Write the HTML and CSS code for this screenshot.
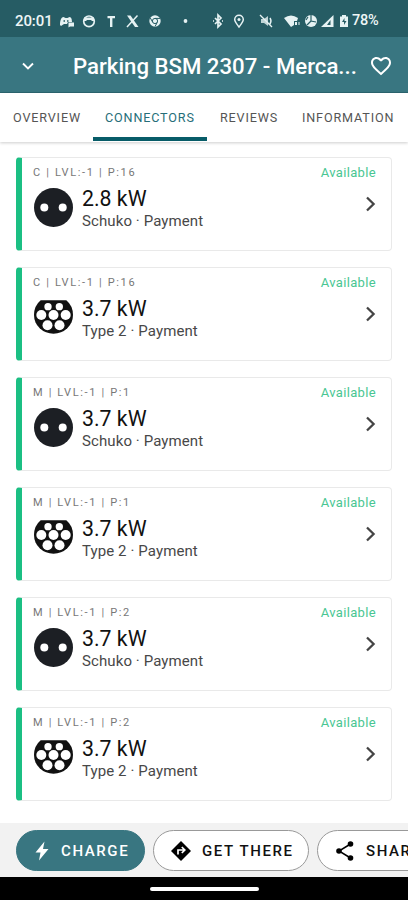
FILE: index.html
```html
<!DOCTYPE html>
<html lang="en">
<head>
<meta charset="utf-8">
<title>Parking BSM 2307</title>
<link rel="stylesheet" href="styles.css">
</head>
<body>
<svg class="defs" width="0" height="0">
  <symbol id="schuko" viewBox="0 0 39 39"><circle cx="19.5" cy="19.5" r="19.5" fill="#1c1f24"/><circle cx="10.3" cy="19.5" r="4" fill="#fff"/><circle cx="28.7" cy="19.5" r="4" fill="#fff"/></symbol>
  <symbol id="type2" viewBox="0 0 117 117"><path d="M20 7H97Q117 24 117 51A58.5 56 0 0 1 0 51Q0 24 20 7Z" fill="#111"/><g fill="#fff"><circle cx="42" cy="26" r="11"/><circle cx="76" cy="26" r="11"/><circle cx="22" cy="51" r="15"/><circle cx="58.5" cy="51" r="15"/><circle cx="95" cy="51" r="15"/><circle cx="40.500" cy="82" r="15"/><circle cx="76.500" cy="82" r="15"/></g></symbol>
  <symbol id="chev" viewBox="0 0 12 18"><path d="M2 2.500L8.600 9L2 15.500" fill="none" stroke="#444" stroke-width="2.300"/></symbol>
</svg>
<header class="status">
  <span class="clock">20:01</span>
  <svg class="status-icons" viewBox="0 0 290 24" width="290" height="24" fill="#e6f2f3" stroke="none">
    <path d="M2 16c0-4 1-8 3.500-8l2 1h2l2-1c2 0 2.500 3 2.500 5h-4l-1 2H6L3 17ZM10.500 13.500h5.500v4h-4l-1.500 1Z"/>
    <path d="M5.500 12h1.500M9 12h1.500" stroke="#265c64" stroke-width="1.400"/>
    <circle cx="31" cy="12.300" r="5.300" fill="none" stroke="#e6f2f3" stroke-width="1.700"/><path d="M26 8.500h10v3.500h-2l-1-1h-4l-1 1h-2Z"/>
    <path d="M49.500 7h7.500v2.300h-2.600V18h-2.400V9.300h-2.500Z"/>
    <path d="M79.500 6.500L69 18" fill="none" stroke="#e6f2f3" stroke-width="1.500"/><path d="M69 6.500h3.500l8 11.500H77Z"/>
    <circle cx="97" cy="12" r="5.700"/><circle cx="97" cy="12" r="2.600" fill="none" stroke="#265c64"/><path d="M97 9.400h5M94.700 13.200L92.300 9M99.200 13.500L97 17.500" stroke="#265c64"/>
    <circle cx="127.500" cy="12" r="1.900"/>
    <path d="M157 9l6 6-3 3V6l3 3-6 6M155 12h1M164 12h1" fill="none" stroke="#e6f2f3" stroke-width="1.700"/>
    <path d="M181 18c-3-4-4.300-5.500-4.300-7.500a4.300 4.300 0 0 1 8.600 0c0 2-1.300 3.500-4.300 7.500Z" fill="none" stroke="#e6f2f3" stroke-width="1.500"/><circle cx="181" cy="10.500" r="1.500"/>
    <path d="M203 10h3l4-3v10l-4-3h-3Z" opacity=".8"/><path d="M202 6l12 12M212 9q2 3 0 6" fill="none" stroke="#e6f2f3" stroke-width="1.400"/>
    <path d="M226 9q7-5 14 0l-1 3h-3v4l-3 2Z"/><path d="M237 13h2v3h-2ZM240.500 13h1v3h-1Z"/>
    <circle cx="253" cy="12" r="6"/><path d="M253 6v6l5 1M253 12l-4 4M250 8l-2 3" fill="none" stroke="#265c64" stroke-width="1.200"/>
    <path d="M275.500 6v12h-12.500Z"/><path d="M272.500 11v5h-3.500Z" fill="#265c64"/>
    <path d="M282 7.500h2V6h4v1.500h2V18h-8Z"/><path d="M286.500 9l-2.500 4h2v3l2.500-4h-2Z" fill="#265c64"/>
  </svg>
  <span class="battery">78%</span>
</header>
<div class="appbar">
  <svg class="down" width="14" height="10" viewBox="0 0 14 10"><path d="M2 2.500l5 5 5-5" fill="none" stroke="#fff" stroke-width="1.900"/></svg>
  <h1>Parking BSM 2307 - Merca...</h1>
  <svg class="heart" width="24" height="24" viewBox="0 0 24 24" fill="#fff"><path d="M16.500 3c-1.740 0-3.410.81-4.500 2.090C10.910 3.810 9.240 3 7.500 3 4.420 3 2 5.420 2 8.500c0 3.780 3.400 6.860 8.550 11.540L12 21.350l1.450-1.320C18.600 15.360 22 12.280 22 8.500 22 5.420 19.580 3 16.500 3zm-4.400 15.550l-.1.100-.1-.1C7.140 14.240 4 11.390 4 8.500 4 6.500 5.500 5 7.500 5c1.540 0 3.040.99 3.570 2.360h1.870C13.460 5.990 14.960 5 16.500 5c2 0 3.500 1.500 3.500 3.500 0 2.890-3.140 5.740-7.900 10.050z"/></svg>
</div>
<nav class="tabs">
  <a class="t1">OVERVIEW</a><a class="t2 active">CONNECTORS</a><a class="t3">REVIEWS</a><a class="t4">INFORMATION</a>
</nav>
<main class="list">
  <article class="card"><svg class="plug"><use href="#schuko"/></svg><div class="info"><p class="place">C | LVL:-1 | P:16</p><p class="power">2.8 kW</p><p class="kind">Schuko · Payment</p></div><div class="side"><span class="avail">Available</span><svg class="chev"><use href="#chev"/></svg></div></article>
  <article class="card"><svg class="plug"><use href="#type2"/></svg><div class="info"><p class="place">C | LVL:-1 | P:16</p><p class="power">3.7 kW</p><p class="kind">Type 2 · Payment</p></div><div class="side"><span class="avail">Available</span><svg class="chev"><use href="#chev"/></svg></div></article>
  <article class="card"><svg class="plug"><use href="#schuko"/></svg><div class="info"><p class="place">M | LVL:-1 | P:1</p><p class="power">3.7 kW</p><p class="kind">Schuko · Payment</p></div><div class="side"><span class="avail">Available</span><svg class="chev"><use href="#chev"/></svg></div></article>
  <article class="card"><svg class="plug"><use href="#type2"/></svg><div class="info"><p class="place">M | LVL:-1 | P:1</p><p class="power">3.7 kW</p><p class="kind">Type 2 · Payment</p></div><div class="side"><span class="avail">Available</span><svg class="chev"><use href="#chev"/></svg></div></article>
  <article class="card"><svg class="plug"><use href="#schuko"/></svg><div class="info"><p class="place">M | LVL:-1 | P:2</p><p class="power">3.7 kW</p><p class="kind">Schuko · Payment</p></div><div class="side"><span class="avail">Available</span><svg class="chev"><use href="#chev"/></svg></div></article>
  <article class="card"><svg class="plug"><use href="#type2"/></svg><div class="info"><p class="place">M | LVL:-1 | P:2</p><p class="power">3.7 kW</p><p class="kind">Type 2 · Payment</p></div><div class="side"><span class="avail">Available</span><svg class="chev"><use href="#chev"/></svg></div></article>
</main>
<footer class="actions">
  <button class="pill charge"><svg width="22" height="22" viewBox="0 0 22 22"><path d="M13.500 1.500L4.500 12.500h5L8 20.500l9.500-11.500h-5.500Z" fill="#fff"/></svg>CHARGE</button>
  <button class="pill there"><svg width="22" height="22" viewBox="0 0 22 22"><path d="M11 1L21 11 11 21 1 11Z" fill="#000"/><path d="M8 14.500V10h6M11.800 7l3 3-3 3" fill="none" stroke="#fff" stroke-width="1.700"/></svg>GET THERE</button>
  <button class="pill share"><svg width="22" height="22" viewBox="0 0 22 22"><path d="M16.500 4L5 11l11.500 7" fill="none" stroke="#000" stroke-width="1.500"/><circle cx="16.500" cy="4" r="2.800"/><circle cx="5" cy="11" r="2.800"/><circle cx="16.500" cy="18" r="2.800"/></svg>SHARE</button>
</footer>
<div class="gesture"><span></span></div>
</body>
</html>
```
FILE: styles.css
```css
* { box-sizing: border-box; }
body { margin: 0; width: 408px; height: 900px; overflow: hidden; display: flex; flex-direction: column; background: #fff; font-family: Roboto, sans-serif; }
p, h1 { margin: 0; }
.defs { position: absolute; }
.status { height: 37px; flex: none; background: #265c64; color: #eef6f6; display: flex; align-items: center; padding: 4px 0 0 15px; font-size: 14.5px; font-weight: 500; white-space: nowrap; }
.clock { width: 43px; font-size: 15px; letter-spacing: -.1px; }
.status-icons { flex: none; }
.battery { margin-left: 4px; letter-spacing: -.3px; }
.appbar { height: 56px; flex: none; background: #397681; color: #fff; display: flex; align-items: center; border-bottom: 1px solid #2c6670; padding: 2px 0 0 21px; }
.down { flex: none; }
.appbar h1 { width: 296px; margin-left: 38px; font-size: 22.2px; line-height: 28px; font-weight: 500; white-space: nowrap; }
.heart { flex: none; }
.tabs { height: 49px; flex: none; display: flex; color: #555; font-size: 12.6px; line-height: 50px; letter-spacing: .85px; background: #fff; box-shadow: 0 1px 3px #0003; white-space: nowrap; }
.tabs a { height: 49px; flex: none; }
.t1 { width: 93px; padding-left: 13px; }
.t2 { width: 114px; padding-left: 12px; }
.t3 { width: 95px; padding-left: 13px; }
.t4 { width: 106px; }
.tabs .active { color: #266e79; border-bottom: 4px solid #075c68; height: 48px; }
.list { flex: 1; padding: 15px 16px 0; display: flex; flex-direction: column; gap: 16px; }
.card { height: 94px; flex: none; display: flex; border: 1px solid #e9e9e9; border-left: 6px solid #1bbf83; border-radius: 4px; padding-left: 12px; background: #fff; }
.plug { width: 39px; height: 39px; flex: none; margin-top: 30px; }
.info { flex: 1; margin-left: 9px; white-space: nowrap; }
.place { margin-left: -49px; padding-top: 7px; font-size: 11px; line-height: 15px; letter-spacing: 1.65px; color: #777; }
.power { font-size: 21.3px; line-height: 24px; margin-top: 7px; color: #111; }
.kind { font-size: 15px; line-height: 18px; margin-top: 1px; letter-spacing: .1px; color: #484848; }
.side { width: 71px; padding: 6px 15px 0 0; display: flex; flex-direction: column; align-items: flex-end; }
.avail { font-size: 13px; line-height: 17px; letter-spacing: .35px; color: #49c692; white-space: nowrap; }
.chev { width: 12px; height: 18px; margin: 14px -1px 0 0; }
.actions { height: 54px; flex: none; background: #f2f2f2; display: flex; gap: 8px; padding: 7px 0 0 16px; overflow: hidden; }
.pill { height: 41px; flex: none; border: 1px solid #999; border-radius: 21px; background: #fff; color: #111; font: 500 15px Roboto, sans-serif; letter-spacing: 1.6px; display: flex; align-items: center; padding: 0 0 0 16px; white-space: nowrap; }
.pill svg { flex: none; margin-right: 10px; }
.charge { width: 129px; background: #397681; border-color: #397681; color: #fff; padding-left: 14px; }
.charge svg { margin-right: 8px; }
.there { width: 156px; }
.share { width: 124px; }
.gesture { height: 23px; flex: none; background: #000; display: flex; justify-content: center; padding-top: 10px; }
.gesture span { width: 109px; height: 4px; border-radius: 2px; background: #fff; }
```
